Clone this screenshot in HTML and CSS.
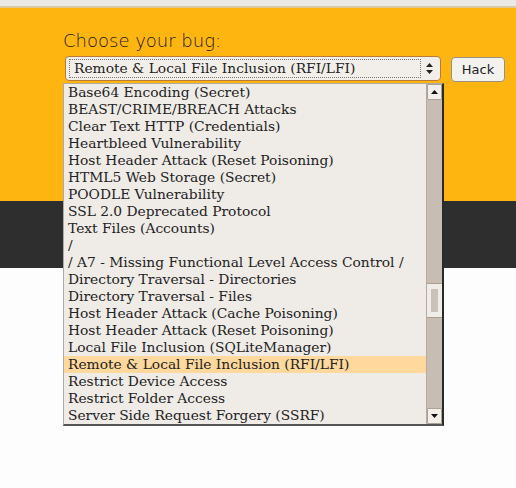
FILE: index.html
```html
<!DOCTYPE html>
<html>
<head>
<meta charset="utf-8">
<link rel="stylesheet" href="styles.css">
</head>
<body>
<div class="topbar"></div>
<div class="orange">
  <div class="form">
    <div class="title">Choose your bug:</div>
    <div class="row">
      <div class="select">
        <div class="focus">Remote &amp; Local File Inclusion (RFI/LFI)</div>
        <div class="spin"><svg width="7" height="11" viewBox="0 0 7 11"><path d="M0 4 L3.5 0 L7 4 Z M0 7 L3.5 11 L7 7 Z" fill="#222"/></svg></div>
      </div>
      <div class="btn">Hack</div>
      <div class="list">
        <div class="items">
          <div class="item">Base64 Encoding (Secret)</div>
          <div class="item">BEAST/CRIME/BREACH Attacks</div>
          <div class="item">Clear Text HTTP (Credentials)</div>
          <div class="item">Heartbleed Vulnerability</div>
          <div class="item">Host Header Attack (Reset Poisoning)</div>
          <div class="item">HTML5 Web Storage (Secret)</div>
          <div class="item">POODLE Vulnerability</div>
          <div class="item">SSL 2.0 Deprecated Protocol</div>
          <div class="item">Text Files (Accounts)</div>
          <div class="item">/</div>
          <div class="item">/ A7 - Missing Functional Level Access Control /</div>
          <div class="item">Directory Traversal - Directories</div>
          <div class="item">Directory Traversal - Files</div>
          <div class="item">Host Header Attack (Cache Poisoning)</div>
          <div class="item">Host Header Attack (Reset Poisoning)</div>
          <div class="item">Local File Inclusion (SQLiteManager)</div>
          <div class="item sel">Remote &amp; Local File Inclusion (RFI/LFI)</div>
          <div class="item">Restrict Device Access</div>
          <div class="item">Restrict Folder Access</div>
          <div class="item">Server Side Request Forgery (SSRF)</div>
        </div>
        <div class="sb">
          <div class="arrow"><svg width="7" height="4" viewBox="0 0 7 4"><path d="M0 4 L3.5 0 L7 4 Z" fill="#111"/></svg></div>
          <div class="track">
            <div class="thumb"><div class="grip"></div></div>
          </div>
          <div class="arrow"><svg width="7" height="4" viewBox="0 0 7 4"><path d="M0 0 L3.5 4 L7 0 Z" fill="#111"/></svg></div>
        </div>
      </div>
    </div>
  </div>
</div>
<div class="dark"></div>
<div class="white"></div>
</body>
</html>
```
FILE: styles.css
```css
html, body { margin: 0; padding: 0; }
body { background: #fdfdfd; font-family: "DejaVu Serif", serif; font-size: 13.8px; color: #222; }
.topbar { height: 6px; background: #ebe9e5; border-bottom: 2px solid #dcc9a0; }
.orange { height: 193px; background: #ffb50f; }
.form { padding: 18px 0 0 63px; }
.title { font-family: "DejaVu Sans", sans-serif; font-size: 18px; font-weight: 300; color: #1a1a1a; height: 30px; line-height: 30px; }
.row { display: flex; gap: 10px; position: relative; }
.select { width: 368px; height: 23px; margin-left: 2px; background: #f2efeb; border: 1px solid #b77a3c; border-radius: 4px; display: flex; align-items: center; padding: 0 3px; box-sizing: content-box; }
.focus { flex: 1; height: 17px; line-height: 17px; border: 1px dotted #777; padding-left: 4px; white-space: nowrap; overflow: hidden; }
.spin { width: 16px; display: flex; justify-content: center; align-items: center; }
.btn { width: 52px; height: 23px; margin-top: 1px; border: 1px solid #9b8f80; border-radius: 4px; background: #f4f2ef; font-family: "DejaVu Sans", sans-serif; font-size: 13px; display: flex; align-items: center; justify-content: center; color: #222; }
.list { position: absolute; left: 0; top: 27px; width: 378px; height: 340px; display: flex; background: #efebe7; border: 1px solid #b0aaa2; border-right: 2px solid #2a2a2a; border-bottom: 2px solid #555; }
.items { flex: 1; overflow: hidden; }
.item { height: 17px; line-height: 17px; padding-left: 4px; white-space: nowrap; }
.item.sel { background: #fed89c; }
.sb { width: 15px; display: flex; flex-direction: column; background: #c8bdb2; border-left: 1px solid #b5aba0; }
.arrow { height: 14px; background: #f2efeb; border: 1px solid #aaa197; border-radius: 1px; display: flex; align-items: center; justify-content: center; }
.track { flex: 1; padding-top: 183px; }
.thumb { height: 33px; background: #f0ede9; border-top: 1px solid #a9a095; border-bottom: 1px solid #a9a095; display: flex; justify-content: center; align-items: center; }
.grip { width: 7px; height: 23px; background-image: radial-gradient(circle, #c9c2ba 0.8px, transparent 1px); background-size: 2px 2px; }
.dark { height: 67px; background: #2e2e2e; }
.white { height: 220px; }
```
